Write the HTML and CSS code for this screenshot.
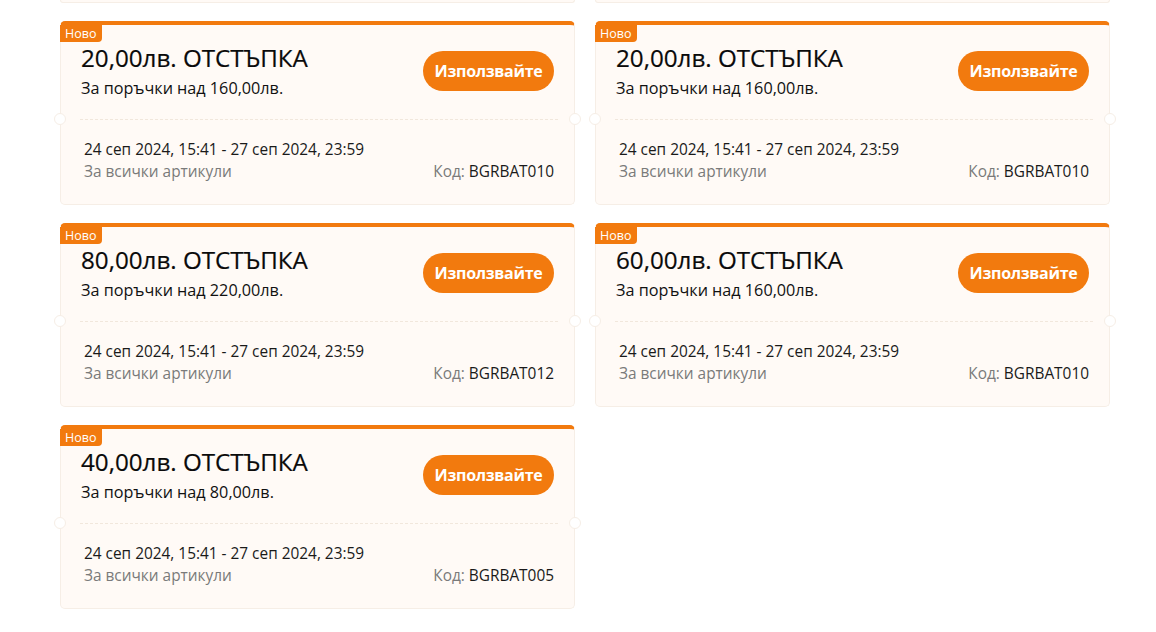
FILE: index.html
```html
<!DOCTYPE html>
<html lang="bg">
<head>
<meta charset="utf-8">
<link rel="stylesheet" href="styles.css">
</head>
<body>
<div class="list">
  <div class="stub"></div>
  <div class="stub"></div>

  <div class="card">
    <div class="badge">Ново</div>
    <div class="top">
      <div class="info">
        <div class="title">20,00лв. ОТСТЪПКА</div>
        <div class="cond">За поръчки над 160,00лв.</div>
      </div>
      <button class="use">Използвайте</button>
    </div>
    <div class="divider"></div>
    <div class="bottom">
      <div class="dates">24 сеп 2024, 15:41 - 27 сеп 2024, 23:59</div>
      <div class="meta"><span class="scope">За всички артикули</span><span class="code"><span class="lbl">Код:</span> BGRBAT010</span></div>
    </div>
  </div>
  <div class="card">
    <div class="badge">Ново</div>
    <div class="top">
      <div class="info">
        <div class="title">20,00лв. ОТСТЪПКА</div>
        <div class="cond">За поръчки над 160,00лв.</div>
      </div>
      <button class="use">Използвайте</button>
    </div>
    <div class="divider"></div>
    <div class="bottom">
      <div class="dates">24 сеп 2024, 15:41 - 27 сеп 2024, 23:59</div>
      <div class="meta"><span class="scope">За всички артикули</span><span class="code"><span class="lbl">Код:</span> BGRBAT010</span></div>
    </div>
  </div>

  <div class="card">
    <div class="badge">Ново</div>
    <div class="top">
      <div class="info">
        <div class="title">80,00лв. ОТСТЪПКА</div>
        <div class="cond">За поръчки над 220,00лв.</div>
      </div>
      <button class="use">Използвайте</button>
    </div>
    <div class="divider"></div>
    <div class="bottom">
      <div class="dates">24 сеп 2024, 15:41 - 27 сеп 2024, 23:59</div>
      <div class="meta"><span class="scope">За всички артикули</span><span class="code"><span class="lbl">Код:</span> BGRBAT012</span></div>
    </div>
  </div>
  <div class="card">
    <div class="badge">Ново</div>
    <div class="top">
      <div class="info">
        <div class="title">60,00лв. ОТСТЪПКА</div>
        <div class="cond">За поръчки над 160,00лв.</div>
      </div>
      <button class="use">Използвайте</button>
    </div>
    <div class="divider"></div>
    <div class="bottom">
      <div class="dates">24 сеп 2024, 15:41 - 27 сеп 2024, 23:59</div>
      <div class="meta"><span class="scope">За всички артикули</span><span class="code"><span class="lbl">Код:</span> BGRBAT010</span></div>
    </div>
  </div>

  <div class="card">
    <div class="badge">Ново</div>
    <div class="top">
      <div class="info">
        <div class="title">40,00лв. ОТСТЪПКА</div>
        <div class="cond">За поръчки над 80,00лв.</div>
      </div>
      <button class="use">Използвайте</button>
    </div>
    <div class="divider"></div>
    <div class="bottom">
      <div class="dates">24 сеп 2024, 15:41 - 27 сеп 2024, 23:59</div>
      <div class="meta"><span class="scope">За всички артикули</span><span class="code"><span class="lbl">Код:</span> BGRBAT005</span></div>
    </div>
  </div>
</div>
</body>
</html>
```

FILE: styles.css
```css
html, body {
  margin: 0;
  padding: 0;
  background: #ffffff;
  overflow: hidden;
}
body {
  font-family: "Open Sans", "Noto Sans", "DejaVu Sans", sans-serif;
  color: #111;
}
.list {
  display: grid;
  grid-template-columns: 515px 515px;
  column-gap: 20px;
  row-gap: 18px;
  padding-left: 60px;
}
.stub {
  height: 3px;
  box-sizing: border-box;
  background: #fffaf6;
  border: 1px solid #f6eee6;
  border-top: none;
  border-radius: 0 0 5px 5px;
}
.card {
  position: relative;
  box-sizing: border-box;
  height: 184px;
  background: #fffaf6;
  border: 1px solid #f6eee6;
  border-top: 4px solid #f27a0e;
  border-radius: 5px;
  display: flex;
  flex-direction: column;
}
.badge {
  position: absolute;
  left: -1px;
  top: 0;
  background: #f27a0e;
  color: #fff;
  font-size: 12.5px;
  line-height: 17px;
  padding: 0 6px 0 5px;
  border-radius: 0 0 4px 0;
}
.top {
  height: 94px;
  box-sizing: border-box;
  display: flex;
  align-items: flex-start;
  justify-content: space-between;
  padding: 18px 20px 0 20px;
}
.title {
  font-size: 24.2px;
  line-height: 30px;
  color: #0a0a0a;
  -webkit-text-stroke: 0.2px #0a0a0a;
}
.cond {
  font-size: 16.2px;
  line-height: 22px;
  margin-top: 4px;
}
.use {
  margin-top: 8px;
  height: 40px;
  width: 131px;
  border: none;
  border-radius: 20px;
  background: #f27a0e;
  color: #fff;
  font-family: "Open Sans", sans-serif;
  font-weight: 700;
  font-size: 16px;
  letter-spacing: -0.3px;
  padding: 0;
}
.divider {
  position: relative;
  margin: 0 16px 0 19px;
  border-top: 1px dashed #f1e7dc;
}
.divider::before, .divider::after {
  content: "";
  position: absolute;
  top: -7px;
  width: 12px;
  height: 12px;
  border-radius: 50%;
  background: #fff;
  border: 1px solid #f6eee6;
  box-sizing: border-box;
}
.divider::before { left: -26px; }
.divider::after { right: -23px; }
.bottom {
  padding: 19px 20px 0 23px;
  font-size: 15.4px;
  line-height: 22px;
}
.dates {
  color: #1a1a1a;
}
.meta {
  display: flex;
  justify-content: space-between;
  color: #7a7a7a;
}
.code { color: #1a1a1a; }
.code .lbl { color: #7a7a7a; }
```
